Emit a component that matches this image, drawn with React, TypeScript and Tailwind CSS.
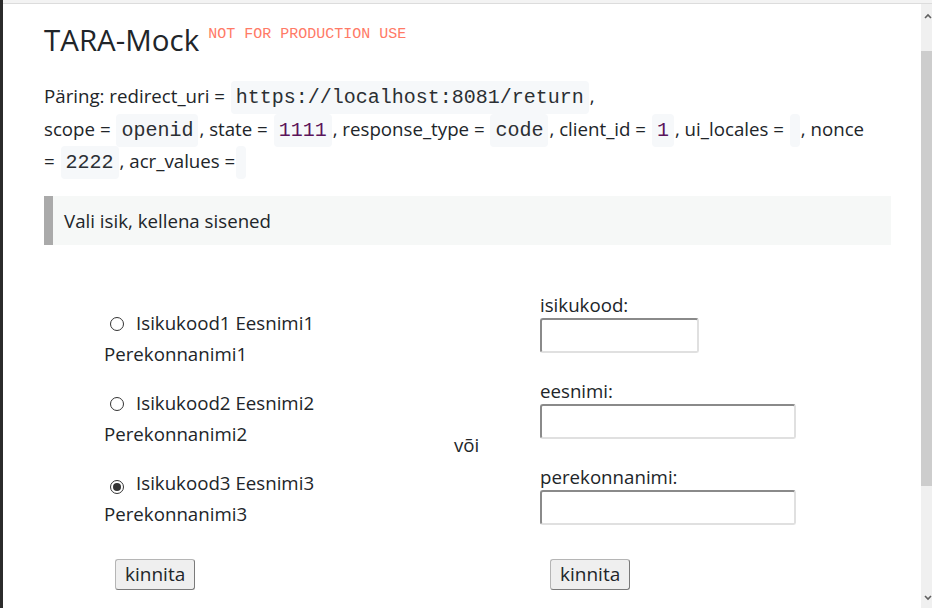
import React from "react";

const body = { fontFamily: '"Open Sans", "Noto Sans", sans-serif' };
const mono = { fontFamily: '"Liberation Mono", "Courier New", monospace' };

function Code({ children, purple }: { children?: React.ReactNode; purple?: boolean }) {
  return (
    <code
      style={mono}
      className={`mx-[1px] rounded-[4px] bg-[#f6f8fa] px-[5px] py-[5px] text-[20px] leading-[20px] ${purple ? "text-[#5b145b]" : "text-[#2b2f33]"}`}
    >
      {children}
    </code>
  );
}

function Radio({ checked }: { checked?: boolean }) {
  return (
    <span className="ml-[6px] mr-[12px] inline-flex h-[14px] w-[14px] items-center justify-center rounded-full border border-[#333] bg-white align-[-1px]">
      {checked && <span className="h-[8px] w-[8px] rounded-full bg-[#333]" />}
    </span>
  );
}

function Person({ n, checked }: { n: number; checked?: boolean }) {
  return (
    <div className="mb-[18px] leading-[31px]">
      <Radio checked={checked} />
      Isikukood{n} Eesnimi{n} Perekonnanimi{n}
    </div>
  );
}

function Field({ label, wide }: { label: string; wide?: boolean }) {
  return (
    <div className="mb-[24px]">
      <div className="leading-[27px]">{label}</div>
      <input
        className={`block h-[35px] ${wide ? "w-[256px]" : "w-[159px]"} rounded-[3px] border-2 border-t-[#8a8a8a] border-l-[#8a8a8a] border-b-[#e0e0e0] border-r-[#e0e0e0] bg-white`}
      />
    </div>
  );
}

function Button() {
  return (
    <button className="h-[31px] rounded-[3px] border border-[#b5b5b5] border-b-[#7a7a7a] border-r-[#7a7a7a] bg-[#efefef] px-[9px] text-[19px] leading-none text-[#212529]">
      kinnita
    </button>
  );
}

export default function App() {
  return (
    <div className="flex h-[608px] w-[932px] overflow-hidden bg-white text-[18.7px] text-[#212529]" style={body}>
      <div className="w-[3px] shrink-0 bg-[#2b2b2b]" />
      <div className="flex flex-1 flex-col">
        <div className="h-[4px] shrink-0 border-b border-[#dcdcdc] bg-[#f3f3f3]" />
        <div className="flex flex-1">
          {/* page */}
          <div className="flex-1 pl-[41px] pr-[30px]">
            <div className="mt-[16px] flex items-start">
              <h1 className="text-[29.5px] leading-[40px]">TARA-Mock</h1>
              <span style={mono} className="ml-[9px] mt-[6px] text-[15px] leading-[18px] text-[#ff7a66]">
                NOT FOR PRODUCTION USE
              </span>
            </div>

            <p className="mt-[20px] leading-[32.5px]">
              Päring: redirect_uri = <Code>https://localhost:8081/return</Code>,
              <br />
              scope = <Code>openid</Code>, state = <Code purple>1111</Code>, response_type = <Code>code</Code>, client_id ={" "}
              <Code purple>1</Code>, ui_locales = <Code> </Code>, nonce
              <br />= <Code>2222</Code>, acr_values = <Code> </Code>
            </p>

            <div className="mt-[18px] border-l-[9px] border-[#aaaaaa] bg-[#f6f8f7] py-[11px] pl-[11px] leading-[27px]">
              Vali isik, kellena sisened
            </div>

            <div className="mt-[46px] flex items-start">
              <div className="ml-[60px] mt-[16px] w-[240px]">
                <Person n={1} />
                <Person n={2} />
                <Person n={3} checked />
              </div>
              <div className="ml-[110px] mt-[140px] w-[86px] leading-[27px]">või</div>
              <div>
                <Field label="isikukood:" />
                <Field label="eesnimi:" wide />
                <Field label="perekonnanimi:" wide />
              </div>
            </div>

            <div className="mt-[10px] flex">
              <div className="ml-[71px] w-[425px]">
                <Button />
              </div>
              <div className="ml-[10px]">
                <Button />
              </div>
            </div>
          </div>

          {/* scrollbar */}
          <div className="flex w-[11px] shrink-0 flex-col bg-[#f0f0f0]">
            <div className="flex h-[47px] items-start justify-end pt-[9px]">
              <svg width="8" height="6" viewBox="0 0 8 6">
                <path d="M1 5 L4 2 L7 5" stroke="#606060" strokeWidth="1.6" fill="none" />
              </svg>
            </div>
            <div className="h-[435px] bg-[#cdcdcd]" />
            <div className="flex flex-1 items-end justify-end pb-[7px]">
              <svg width="8" height="6" viewBox="0 0 8 6">
                <path d="M1 1 L4 4 L7 1" stroke="#606060" strokeWidth="1.6" fill="none" />
              </svg>
            </div>
          </div>
        </div>
      </div>
    </div>
  );
}
